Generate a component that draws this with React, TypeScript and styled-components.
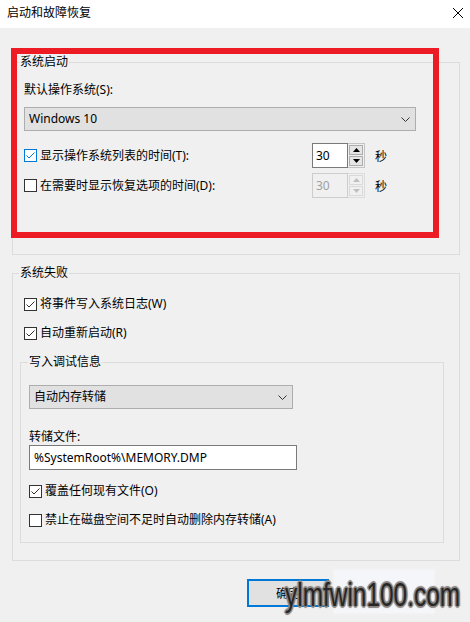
import React from "react";
import styled, { createGlobalStyle } from "styled-components";

const GlobalStyle = createGlobalStyle`
  html, body {
    margin: 0;
    padding: 0;
    background: #f0f0f0;
  }
  body {
    font-family: "Noto Sans", "Noto Sans CJK SC", sans-serif;
    font-size: 12px;
    color: #000;
  }
  * {
    box-sizing: border-box;
  }
`;

const Window = styled.div`
  position: relative;
  width: 470px;
  height: 622px;
  overflow: hidden;
  background: #f0f0f0;
`;

const TitleBar = styled.div`
  height: 28px;
  background: #fff;
  display: flex;
  align-items: flex-start;
  justify-content: space-between;
  padding: 5px 7px 0 7px;
  line-height: 16px;
`;

const CloseIcon = styled.svg`
  margin-top: 3px;
`;

const Body = styled.div`
  padding: 0 10px 0 12px;
`;

const GroupBox = styled.fieldset<{ $top: number }>`
  margin: ${(p) => p.$top}px 0 0 0;
  padding: 0;
  min-inline-size: 0;
  border: 1px solid #dcdcdc;
`;

const Legend = styled.legend<{ $inset?: number }>`
  margin-left: ${(p) => p.$inset ?? 6}px;
  padding: 0 1px;
  line-height: 16px;
  font-size: 12px;
`;

const GroupBody = styled.div<{ $pad: string }>`
  padding: ${(p) => p.$pad};
  display: flex;
  flex-direction: column;
`;

const Label = styled.div<{ $top?: number }>`
  line-height: 16px;
  margin-top: ${(p) => p.$top ?? 0}px;
`;

const Combo = styled.div<{ $width: number; $top: number }>`
  width: ${(p) => p.$width}px;
  height: 24px;
  margin-top: ${(p) => p.$top}px;
  background: #e1e1e1;
  border: 1px solid #adadad;
  display: flex;
  align-items: center;
  justify-content: space-between;
  padding: 0 5px 0 4px;
  line-height: 16px;
`;

const TextBox = styled.div`
  width: 268px;
  height: 25px;
  background: #fff;
  border: 1px solid #7a7a7a;
  display: flex;
  align-items: center;
  padding-left: 4px;
`;

const TimeRow = styled.div<{ $top: number }>`
  display: grid;
  grid-template-columns: 288px 53px auto;
  align-items: center;
  height: 25px;
  margin-top: ${(p) => p.$top}px;
`;

const Unit = styled.span`
  padding-left: 10px;
`;

const CheckRow = styled.div<{ $top?: number }>`
  display: flex;
  align-items: center;
  gap: 3px;
  height: 16px;
  line-height: 16px;
  margin-top: ${(p) => p.$top ?? 0}px;
`;

const Box = styled.span<{ $focus?: boolean }>`
  width: 13px;
  height: 13px;
  flex: none;
  border: 1px solid ${(p) => (p.$focus ? "#0078d7" : "#333")};
  background: #fff;
  display: flex;
  color: ${(p) => (p.$focus ? "#0078d7" : "#333")};
`;

const CheckList = styled.div`
  padding-left: 4px;
  display: flex;
  flex-direction: column;
`;

const Spinner = styled.div`
  display: flex;
  width: 53px;
  height: 25px;
`;

const SpinField = styled.div<{ $disabled?: boolean }>`
  width: 36px;
  height: 25px;
  border: 1px solid ${(p) => (p.$disabled ? "#cccccc" : "#7a7a7a")};
  background: ${(p) => (p.$disabled ? "#f0f0f0" : "#fff")};
  color: ${(p) => (p.$disabled ? "#a0a0a0" : "#000")};
  display: flex;
  align-items: center;
  padding-left: 3px;
`;

const SpinButtons = styled.div<{ $disabled?: boolean }>`
  width: 17px;
  height: 25px;
  border: 1px solid ${(p) => (p.$disabled ? "#dcdcdc" : "#c4c4c4")};
  border-left: none;
  padding: 1px;
  display: flex;
  flex-direction: column;
  gap: 1px;
`;

const SpinButton = styled.div<{ $disabled?: boolean }>`
  flex: 1;
  background: ${(p) => (p.$disabled ? "#f0f0f0" : "#e5e5e5")};
  border: 1px solid ${(p) => (p.$disabled ? "#d9d9d9" : "#adadad")};
  display: flex;
  align-items: center;
  justify-content: center;
  color: ${(p) => (p.$disabled ? "#bfbfbf" : "#000")};
`;

const ButtonBar = styled.div`
  margin-top: 18px;
  padding-left: 235px;
  display: flex;
`;

const Button = styled.div`
  width: 82px;
  height: 28px;
  border: 2px solid #0078d7;
  background: #e1e1e1;
  display: flex;
  align-items: center;
  justify-content: center;
`;

const RedMark = styled.div`
  position: absolute;
  left: 11px;
  top: 48px;
  width: 428px;
  height: 190px;
  border: 6px solid #ed1c24;
  pointer-events: none;
`;

const WatermarkGlow = styled.div`
  position: absolute;
  left: 334px;
  top: 570px;
  width: 100px;
  height: 43px;
  background: #f4f6f9;
  box-shadow: 0 0 4px #f4f6f9;
`;

const Watermark = styled.div`
  position: absolute;
  left: 285px;
  top: 578px;
  font-family: "Liberation Sans", Arial, sans-serif;
  font-size: 33px;
  line-height: 33px;
  color: #262626;
  white-space: nowrap;
  transform: scaleX(0.74);
  transform-origin: left top;
  text-shadow: 2px 0 1px #8a8480, -2px 0 1px #8a8480, 0 2px 1px #8a8480,
    0 -2px 1px #8a8480, 1px 1px 1px #8a8480, -1px -1px 1px #8a8480,
    1px -1px 1px #8a8480, -1px 1px 1px #8a8480;
`;

const Chevron = () => (
  <svg width="9" height="5" viewBox="0 0 9 5">
    <polyline points="0.5,0.5 4.5,4.5 8.5,0.5" fill="none" stroke="#333" strokeWidth="1" />
  </svg>
);

const Arrow = ({ up }: { up?: boolean }) => (
  <svg width="7" height="4" viewBox="0 0 7 4">
    <polygon points={up ? "0,4 3.5,0 7,4" : "0,0 3.5,4 7,0"} fill="currentColor" />
  </svg>
);

const Check = ({ checked, focus, label, top }: { checked?: boolean; focus?: boolean; label: string; top?: number }) => (
  <CheckRow $top={top}>
    <Box $focus={focus}>
      {checked && (
        <svg width="11" height="11" viewBox="0 0 11 11">
          <polyline points="1.5,5.5 4,8 9.5,2.5" fill="none" stroke="currentColor" strokeWidth="1" />
        </svg>
      )}
    </Box>
    <span>{label}</span>
  </CheckRow>
);

const Spin = ({ value, disabled }: { value: number; disabled?: boolean }) => (
  <Spinner>
    <SpinField $disabled={disabled}>{value}</SpinField>
    <SpinButtons $disabled={disabled}>
      <SpinButton $disabled={disabled}>
        <Arrow up />
      </SpinButton>
      <SpinButton $disabled={disabled}>
        <Arrow />
      </SpinButton>
    </SpinButtons>
  </Spinner>
);

export default function App() {
  return (
    <Window>
      <GlobalStyle />
      <TitleBar>
        <span>启动和故障恢复</span>
        <CloseIcon width="10" height="10" viewBox="0 0 10 10">
          <path d="M0 0 L10 10 M10 0 L0 10" stroke="#000" strokeWidth="1" />
        </CloseIcon>
      </TitleBar>
      <Body>
        <GroupBox $top={26}>
          <Legend>系统启动</Legend>
          <GroupBody $pad="12px 43px 56px 11px">
            <Label>默认操作系统(S):</Label>
            <Combo $width={392} $top={9}>
              <span>Windows 10</span>
              <Chevron />
            </Combo>
            <TimeRow $top={12}>
              <Check checked focus label="显示操作系统列表的时间(T):" />
              <Spin value={30} />
              <Unit>秒</Unit>
            </TimeRow>
            <TimeRow $top={5}>
              <Check label="在需要时显示恢复选项的时间(D):" />
              <Spin value={30} disabled />
              <Unit>秒</Unit>
            </TimeRow>
          </GroupBody>
        </GroupBox>

        <GroupBox $top={10}>
          <Legend>系统失败</Legend>
          <GroupBody $pad="15px 15px 17px 7px">
            <CheckList>
              <Check checked label="将事件写入系统日志(W)" />
              <Check checked label="自动重新启动(R)" top={13} />
            </CheckList>
            <GroupBox $top={13}>
              <Legend $inset={7}>写入调试信息</Legend>
              <GroupBody $pad="15px 10px 14px 8px">
                <Combo $width={264} $top={0}>
                  <span>自动内存转储</span>
                  <Chevron />
                </Combo>
                <Label $top={20}>转储文件:</Label>
                <TextBox>%SystemRoot%\MEMORY.DMP</TextBox>
                <Check checked label="覆盖任何现有文件(O)" top={13} />
                <Check label="禁止在磁盘空间不足时自动删除内存转储(A)" top={13} />
              </GroupBody>
            </GroupBox>
          </GroupBody>
        </GroupBox>

        <ButtonBar>
          <Button>确定</Button>
        </ButtonBar>
      </Body>
      <RedMark />
      <WatermarkGlow />
      <Watermark>ylmfwin100.com</Watermark>
    </Window>
  );
}
